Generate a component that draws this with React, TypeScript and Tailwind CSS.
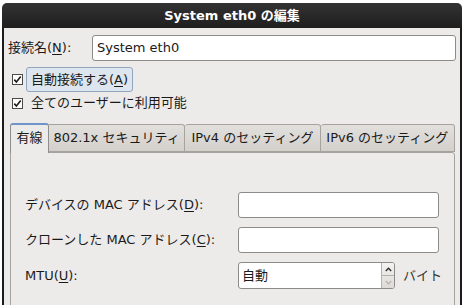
import React from 'react';

const font = { fontFamily: '"DejaVu Sans", "Noto Sans CJK JP", sans-serif' };

function Check() {
  return (
    <svg width="11" height="11" viewBox="0 0 11 11" className="shrink-0">
      <rect x="0.5" y="0.5" width="10" height="10" fill="#fff" stroke="#4a4a4a" />
      <path d="M2.3 5.6 L4.4 8 L8.7 2.6" fill="none" stroke="#1a1a1a" strokeWidth="1.6" />
    </svg>
  );
}

function U({ children }: { children: React.ReactNode }) {
  return <span className="underline underline-offset-2">{children}</span>;
}

export default function App() {
  return (
    <div className="w-[466px] h-[305px] bg-white overflow-hidden text-[13px] text-[#1a1a1a]" style={font}>
      <div className="ml-[2px] mt-[3px] w-[460px] h-[302px] flex flex-col">
        <div className="shrink-0 h-[25px] rounded-t-[5px] bg-gradient-to-b from-[#333333] to-[#1e1e1e] flex items-center justify-center text-white font-bold text-[13px]">
          System eth0 の編集
        </div>
        <div className="flex-1 bg-[#edebe9] border-x-2 border-[#1b1b1b] pl-[4px] pr-[4px]">
          <div className="flex items-center mt-[7px] h-[26px]">
            <span className="w-[84px] shrink-0">
              接続名(<U>N</U>):
            </span>
            <div className="flex-1 h-[26px] bg-white border border-[#8b8b8b] rounded-[3px] flex items-center px-[4px]">
              System eth0
            </div>
          </div>
          <div className="flex items-center mt-[6px] h-[25px] pl-[4px]">
            <Check />
            <span className="ml-[3px] h-[25px] px-[4px] flex items-center rounded-[3px] bg-[#dde5ef] border border-[#93a6bf]">
              自動接続する(<U>A</U>)
            </span>
          </div>
          <div className="flex items-center h-[22px] pl-[4px]">
            <Check />
            <span className="ml-[8px]">全てのユーザーに利用可能</span>
          </div>
          <div className="mt-[8px] ml-[2px] mr-[1px]">
            <div className="flex items-end h-[30px]">
              <div className="h-[30px] w-[39px] rounded-t-[3px] border border-b-0 border-[#8e8e8e] border-t-2 border-t-[#6f95c9] bg-[#edebe9] flex items-center justify-center relative z-10 -mb-px pb-[2px]">
                有線
              </div>
              <div className="h-[28px] w-[137px] rounded-tr-[3px] border border-l-0 border-[#a6a39f] bg-gradient-to-b from-[#e2e0dd] to-[#d3d0cc] flex items-center justify-center">
                802.1x セキュリティ
              </div>
              <div className="h-[28px] w-[136px] rounded-t-[3px] border border-l-0 border-[#a6a39f] bg-gradient-to-b from-[#e2e0dd] to-[#d3d0cc] flex items-center justify-center">
                IPv4 のセッティング
              </div>
              <div className="h-[28px] w-[135px] rounded-t-[3px] border border-l-0 border-[#a6a39f] bg-gradient-to-b from-[#e2e0dd] to-[#d3d0cc] flex items-center justify-center">
                IPv6 のセッティング
              </div>
            </div>
            <div className="h-[160px] border border-[#a6a39f] rounded-tr-[3px] bg-[#edebe9] pl-[14px] pr-[15px] pt-[39px]">
              <div className="flex items-center h-[26px]">
                <span className="w-[213px] shrink-0 whitespace-nowrap">
                  デバイスの MAC アドレス(<U>D</U>):
                </span>
                <div className="flex-1 h-[26px] bg-white border border-[#8b8b8b] rounded-[3px]" />
              </div>
              <div className="flex items-center h-[26px] mt-[9px]">
                <span className="w-[213px] shrink-0 whitespace-nowrap">
                  クローンした MAC アドレス(<U>C</U>):
                </span>
                <div className="flex-1 h-[26px] bg-white border border-[#8b8b8b] rounded-[3px]" />
              </div>
              <div className="flex items-center h-[27px] mt-[9px] whitespace-nowrap">
                <span className="w-[213px] shrink-0">
                  MTU(<U>U</U>):
                </span>
                <div className="w-[157px] shrink-0 h-[27px] bg-white border border-[#8b8b8b] rounded-[3px] flex">
                  <div className="flex-1 flex items-center px-[3px]">自動</div>
                  <div className="w-[13px] border-l border-[#b5b2ad] flex flex-col bg-gradient-to-b from-[#f4f3f1] to-[#dddad6] rounded-r-[2px]">
                    <div className="flex-1 flex items-center justify-center border-b border-[#b5b2ad]">
                      <svg width="7" height="5" viewBox="0 0 7 5">
                        <path d="M0.8 4 L3.5 1.2 L6.2 4" fill="none" stroke="#2a2a2a" strokeWidth="1.3" />
                      </svg>
                    </div>
                    <div className="flex-1 flex items-center justify-center">
                      <svg width="7" height="5" viewBox="0 0 7 5">
                        <path d="M0.8 1 L3.5 3.8 L6.2 1" fill="none" stroke="#b2b0ac" strokeWidth="1.2" />
                      </svg>
                    </div>
                  </div>
                </div>
                <span className="ml-[8px] text-[#333]">バイト</span>
              </div>
            </div>
          </div>
        </div>
      </div>
    </div>
  );
}
